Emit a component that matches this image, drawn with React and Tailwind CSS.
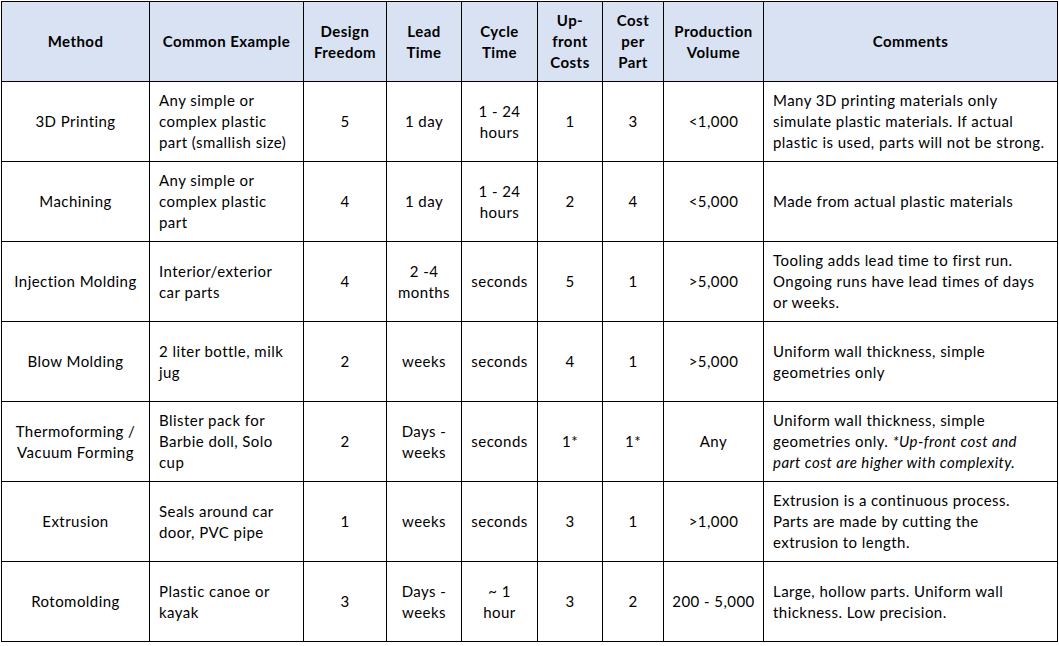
import React from 'react';

const headers = [
  ['Method'],
  ['Common Example'],
  ['Design', 'Freedom'],
  ['Lead', 'Time'],
  ['Cycle', 'Time'],
  ['Up-', 'front', 'Costs'],
  ['Cost', 'per', 'Part'],
  ['Production', 'Volume'],
  ['Comments'],
];

const widths = ['w-[148px]', 'w-[154px]', 'w-[83px]', 'w-[75px]', 'w-[76px]', 'w-[65px]', 'w-[61px]', 'w-[100px]', 'w-[294px]'];

const rows = [
  {
    method: ['3D Printing'],
    example: ['Any simple or', 'complex plastic', 'part (smallish size)'],
    freedom: '5', lead: ['1 day'], cycle: ['1 - 24', 'hours'], upfront: '1', cost: '3', volume: '<1,000',
    comments: ['Many 3D printing materials only', 'simulate plastic materials. If actual', 'plastic is used, parts will not be strong.'],
  },
  {
    method: ['Machining'],
    example: ['Any simple or', 'complex plastic', 'part'],
    freedom: '4', lead: ['1 day'], cycle: ['1 - 24', 'hours'], upfront: '2', cost: '4', volume: '<5,000',
    comments: ['Made from actual plastic materials'],
  },
  {
    method: ['Injection Molding'],
    example: ['Interior/exterior', 'car parts'],
    freedom: '4', lead: ['2 -4', 'months'], cycle: ['seconds'], upfront: '5', cost: '1', volume: '>5,000',
    comments: ['Tooling adds lead time to first run.', 'Ongoing runs have lead times of days', 'or weeks.'],
  },
  {
    method: ['Blow Molding'],
    example: ['2 liter bottle, milk', 'jug'],
    freedom: '2', lead: ['weeks'], cycle: ['seconds'], upfront: '4', cost: '1', volume: '>5,000',
    comments: ['Uniform wall thickness, simple', 'geometries only'],
  },
  {
    method: ['Thermoforming /', 'Vacuum Forming'],
    example: ['Blister pack for', 'Barbie doll, Solo', 'cup'],
    freedom: '2', lead: ['Days -', 'weeks'], cycle: ['seconds'], upfront: '1*', cost: '1*', volume: 'Any',
    comments: [
      'Uniform wall thickness, simple',
      <>geometries only. <em>*Up-front cost and</em></>,
      <em>part cost are higher with complexity.</em>,
    ],
  },
  {
    method: ['Extrusion'],
    example: ['Seals around car', 'door, PVC pipe'],
    freedom: '1', lead: ['weeks'], cycle: ['seconds'], upfront: '3', cost: '1', volume: '>1,000',
    comments: ['Extrusion is a continuous process.', 'Parts are made by cutting the', 'extrusion to length.'],
  },
  {
    method: ['Rotomolding'],
    example: ['Plastic canoe or', 'kayak'],
    freedom: '3', lead: ['Days -', 'weeks'], cycle: ['~ 1', 'hour'], upfront: '3', cost: '2', volume: '200 - 5,000',
    comments: ['Large, hollow parts. Uniform wall', 'thickness. Low precision.'],
  },
];

const Lines = ({ lines }) => lines.map((l, i) => <span key={i} className="block whitespace-nowrap">{l}</span>);

const App = () => {
  return (
    <div className="bg-white w-[1059px] h-[646px] pl-px pt-px text-black" style={{ fontFamily: 'Lato, "Liberation Sans", sans-serif' }}>
      <table className="table-fixed border-collapse border border-black w-[1057px] text-[15px] leading-[21px] tracking-[0.45px]">
        <colgroup>
          {widths.map((w, i) => <col key={i} className={w} />)}
        </colgroup>
        <thead>
          <tr className="h-[80px] bg-[#d9e2f3]">
            {headers.map((h, i) => (
              <th key={i} className="border border-black px-1 align-middle text-center font-bold">
                <Lines lines={h} />
              </th>
            ))}
          </tr>
        </thead>
        <tbody>
          {rows.map((r, i) => (
            <tr key={i} className="h-[80px]">
              <td className="border border-black px-1 text-center align-middle"><Lines lines={r.method} /></td>
              <td className="border border-black pl-[9px] pr-1 text-left align-middle"><Lines lines={r.example} /></td>
              <td className="border border-black text-center align-middle">{r.freedom}</td>
              <td className="border border-black text-center align-middle"><Lines lines={r.lead} /></td>
              <td className="border border-black text-center align-middle"><Lines lines={r.cycle} /></td>
              <td className="border border-black text-center align-middle">{r.upfront}</td>
              <td className="border border-black text-center align-middle">{r.cost}</td>
              <td className="border border-black text-center align-middle">{r.volume}</td>
              <td className="border border-black pl-[9px] pr-1 text-left align-middle"><Lines lines={r.comments} /></td>
            </tr>
          ))}
        </tbody>
      </table>
    </div>
  );
};

export default App;
